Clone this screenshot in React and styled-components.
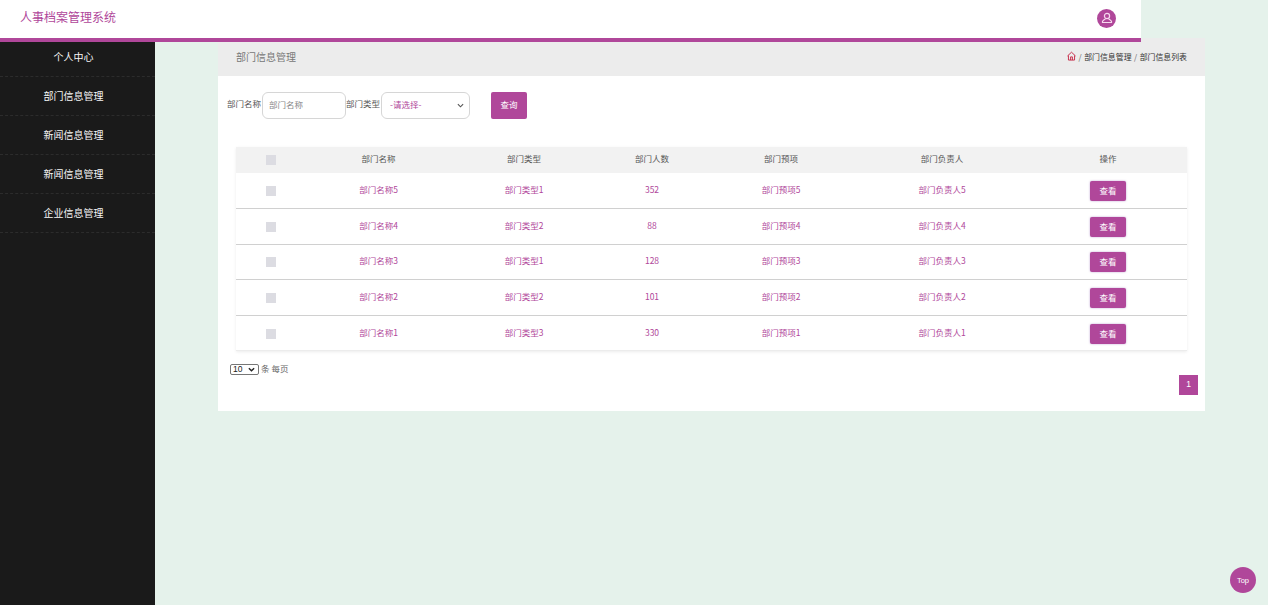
import styled, { createGlobalStyle } from "styled-components";

const PURPLE = "#b0479a";
const chevron = (color, weight) =>
  `url("data:image/svg+xml,%3Csvg xmlns='http://www.w3.org/2000/svg' viewBox='0 0 8 5'%3E%3Cpath d='M1 1l3 3 3-3' fill='none' stroke='${color}' stroke-width='${weight}'/%3E%3C/svg%3E")`;

const menus = ["部门信息管理", "新闻信息管理", "新闻信息管理", "企业信息管理"];
const columns = ["部门名称", "部门类型", "部门人数", "部门预项", "部门负责人", "操作"];
const rows = [
  { name: "部门名称5", type: "部门类型1", count: 352, item: "部门预项5", owner: "部门负责人5" },
  { name: "部门名称4", type: "部门类型2", count: 88, item: "部门预项4", owner: "部门负责人4" },
  { name: "部门名称3", type: "部门类型1", count: 128, item: "部门预项3", owner: "部门负责人3" },
  { name: "部门名称2", type: "部门类型2", count: 101, item: "部门预项2", owner: "部门负责人2" },
  { name: "部门名称1", type: "部门类型3", count: 330, item: "部门预项1", owner: "部门负责人1" },
];

const GlobalStyle = createGlobalStyle`
  * { box-sizing: border-box; }
  html, body { margin: 0; height: 100%; }
  body {
    background: #e5f2eb;
    font-family: "Noto Sans CJK SC", "Liberation Sans", sans-serif;
    font-size: 8.5px;
    overflow: hidden;
  }
`;

const Page = styled.div`
  height: 605px;
  display: flex;
  flex-direction: column;
  position: relative;
`;

const TopBar = styled.header`
  width: 1141px;
  height: 42px;
  flex: none;
  background: #fff;
  border-bottom: 4px solid ${PURPLE};
  display: flex;
  align-items: center;
  justify-content: space-between;
  padding: 0 25px 2px 20px;
  position: relative;
  z-index: 2;
`;

const Brand = styled.div`
  font-size: 12px;
  color: ${PURPLE};
  padding-bottom: 3px;
`;

const Avatar = styled.div`
  width: 19px;
  height: 19px;
  border-radius: 50%;
  background: ${PURPLE};
  display: flex;
  align-items: center;
  justify-content: center;
`;

const Body = styled.div`
  flex: 1;
  display: flex;
  min-height: 0;
`;

const Sidebar = styled.nav`
  width: 155px;
  flex: none;
  background: #1a1a1a;
`;

const MenuItem = styled.div`
  height: ${(p) => (p.$first ? "35px" : "39px")};
  display: flex;
  align-items: center;
  justify-content: center;
  padding: 0 8px ${(p) => (p.$first ? "5px" : "2px")} 0;
  color: #f7f7f7;
  font-size: 10px;
  border-bottom: 1px dashed #2c2c2c;
`;

const Main = styled.main`
  margin: -4px 0 0 63px;
  width: 987px;
  align-self: flex-start;
  background: #fff;
  height: 373px;
  display: flex;
  flex-direction: column;
`;

const PanelHead = styled.div`
  height: 38px;
  flex: none;
  background: #ececec;
  display: flex;
  align-items: center;
  justify-content: space-between;
  padding: 0 18px 2px 18px;
  color: #777;
  font-size: 10px;
`;

const Crumbs = styled.div`
  display: flex;
  align-items: center;
  gap: 2.5px;
  font-size: 7.9px;
  color: #333;
`;

const Slash = styled.span`
  color: #666;
`;

const SearchBar = styled.form`
  display: flex;
  align-items: center;
  margin: 16px 0 0 9px;
  height: 27px;
  color: #555;
`;

const Label = styled.label`
  white-space: nowrap;
  padding-bottom: 5px;
`;

const TextInput = styled.input`
  width: 84px;
  height: 27px;
  margin: 0 0 0 1px;
  padding: 0 6px 3px;
  border: 1px solid #d6d6d6;
  border-radius: 6px;
  font: inherit;
  &::placeholder { color: #888; }
`;

const TypeSelect = styled.select`
  appearance: none;
  width: 89px;
  height: 27px;
  margin-left: 1px;
  padding: 0 4px 3px 8px;
  border: 1px solid #d6d6d6;
  border-radius: 6px;
  background: #fff ${chevron("%23555", 1.3)} no-repeat right 5px center / 7px 5px;
  color: ${PURPLE};
  font: inherit;
`;

const SearchButton = styled.button`
  width: 36px;
  height: 27px;
  margin-left: 21px;
  border: 0;
  border-radius: 2px;
  background: ${PURPLE};
  color: #fff;
  font: inherit;
  padding: 0 0 3px;
`;

const Table = styled.table`
  width: 951px;
  margin: 28px 0 0 18px;
  border-collapse: collapse;
  table-layout: fixed;
  box-shadow: 0 1px 3px rgba(0, 0, 0, 0.08);
`;

const HeadCell = styled.th`
  height: 26px;
  background: #f2f2f2;
  color: #555;
  font-weight: 400;
  text-align: center;
  padding: 0 0 5px;
`;

const Row = styled.tr`
  height: 35.6px;
  border-bottom: 1px solid #d0d0d0;
  &:last-child { border-bottom: 1px solid #ececec; }
`;

const Cell = styled.td`
  color: ${PURPLE};
  text-align: center;
  padding: 0 0 3px;
`;

const ActionCell = styled.td`
  text-align: center;
  padding: 1px 0 0;
`;

const CheckBox = styled.span`
  display: inline-block;
  width: 10px;
  height: 10px;
  margin-top: ${(p) => (p.$head ? "4px" : "2px")};
  vertical-align: middle;
  background: #dcdce2;
`;

const ViewButton = styled.button`
  display: block;
  width: 36px;
  height: 20px;
  margin: 0 auto;
  border: 0;
  border-radius: 2px;
  background: ${PURPLE};
  color: #fff;
  font: inherit;
  padding: 0 0 2px;
  box-shadow: 0 0 2px rgba(120, 60, 160, 0.5);
`;

const Footer = styled.div`
  display: flex;
  align-items: center;
  gap: 2px;
  margin: 12px 0 0 12px;
  height: 12px;
  color: #666;
`;

const FooterText = styled.span`
  padding-bottom: 3px;
`;

const SizeSelect = styled.select`
  appearance: none;
  width: 29px;
  height: 11px;
  padding: 0 0 0 2px;
  font: 8.5px/9px "Liberation Sans", sans-serif;
  background: #fff ${chevron("%23222", 1.6)} no-repeat right 3px center / 7px 5px;
  border: 1px solid #767676;
  border-radius: 2px;
  color: #222;
`;

const Pager = styled.div`
  display: flex;
  justify-content: flex-end;
  padding-right: 7px;
`;

const PageNo = styled.span`
  width: 19px;
  height: 20px;
  background: ${PURPLE};
  color: #fff;
  display: flex;
  align-items: center;
  justify-content: center;
  font-family: "Liberation Sans", sans-serif;
  padding-bottom: 2px;
`;

const TopButton = styled.button`
  position: absolute;
  right: 12px;
  bottom: 12px;
  width: 26px;
  height: 26px;
  border: 0;
  border-radius: 50%;
  padding: 0;
  background: ${PURPLE};
  color: #fff;
  font: 7.5px "Liberation Sans", sans-serif;
`;

const App = () => (
  <Page>
    <GlobalStyle />
    <TopBar>
      <Brand>人事档案管理系统</Brand>
      <Avatar>
        <svg width="12" height="12" viewBox="0 0 12 12" fill="none" stroke="#f6d9ee" strokeWidth="1.2">
          <circle cx="6" cy="4" r="2.6" />
          <path d="M4.4 6.4 C4.4 7.6 1.5 8 1.5 9.6 V10.5 H10.5 V9.6 C10.5 8 7.6 7.6 7.6 6.4" />
        </svg>
      </Avatar>
    </TopBar>
    <Body>
      <Sidebar>
        <MenuItem $first>个人中心</MenuItem>
        {menus.map((menu, i) => (
          <MenuItem key={i}>{menu}</MenuItem>
        ))}
      </Sidebar>
      <Main>
        <PanelHead>
          部门信息管理
          <Crumbs>
            <svg width="9" height="10" viewBox="0 0 10 10" fill="none" stroke="#c4203f" strokeWidth="1">
              <path d="M0.5 5 L5 0.8 L9.5 5" />
              <path d="M1.6 4.4 V9.5 H8.4 V4.4" />
              <path d="M4 9.5 V6 H6 V9.5" />
            </svg>
            <Slash>/</Slash>
            部门信息管理
            <Slash>/</Slash>
            部门信息列表
          </Crumbs>
        </PanelHead>
        <SearchBar>
          <Label>部门名称</Label>
          <TextInput placeholder="部门名称" />
          <Label>部门类型</Label>
          <TypeSelect defaultValue="">
            <option value="">-请选择-</option>
          </TypeSelect>
          <SearchButton type="button">查询</SearchButton>
        </SearchBar>
        <Table>
          <colgroup>
            <col width="70" />
            <col width="145" />
            <col width="146" />
            <col width="110" />
            <col width="148" />
            <col width="174" />
            <col width="158" />
          </colgroup>
          <thead>
            <tr>
              <HeadCell>
                <CheckBox $head />
              </HeadCell>
              {columns.map((col) => (
                <HeadCell key={col}>{col}</HeadCell>
              ))}
            </tr>
          </thead>
          <tbody>
            {rows.map((row) => (
              <Row key={row.name}>
                <Cell>
                  <CheckBox />
                </Cell>
                <Cell>{row.name}</Cell>
                <Cell>{row.type}</Cell>
                <Cell>{row.count}</Cell>
                <Cell>{row.item}</Cell>
                <Cell>{row.owner}</Cell>
                <ActionCell>
                  <ViewButton type="button">查看</ViewButton>
                </ActionCell>
              </Row>
            ))}
          </tbody>
        </Table>
        <Footer>
          <SizeSelect defaultValue="10">
            <option value="10">10</option>
          </SizeSelect>
          <FooterText>条 每页</FooterText>
        </Footer>
        <Pager>
          <PageNo>1</PageNo>
        </Pager>
      </Main>
    </Body>
    <TopButton type="button">Top</TopButton>
  </Page>
);

export default App;
